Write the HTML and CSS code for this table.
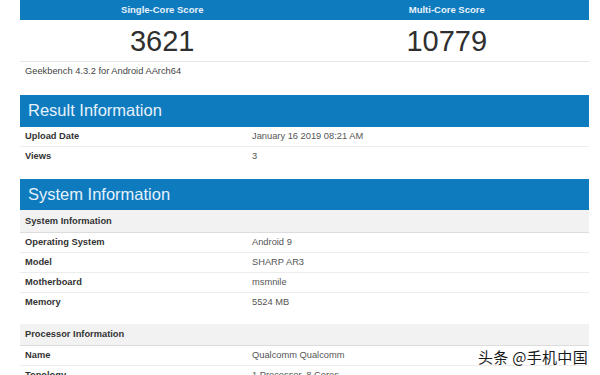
FILE: index.html
```html
<!DOCTYPE html>
<html>
<head>
<meta charset="utf-8">
<link rel="stylesheet" href="styles.css">
</head>
<body>
<div class="page">
  <div class="scores">
    <div class="score-col">
      <div class="score-head">Single-Core Score</div>
      <div class="score-num">3621</div>
    </div>
    <div class="score-col">
      <div class="score-head">Multi-Core Score</div>
      <div class="score-num">10779</div>
    </div>
  </div>
  <div class="note">Geekbench 4.3.2 for Android AArch64</div>

  <div class="section result">
    <div class="sec-title">Result Information</div>
    <div class="row"><div class="lbl">Upload Date</div><div class="val">January 16 2019 08:21 AM</div></div>
    <div class="row last"><div class="lbl">Views</div><div class="val">3</div></div>
  </div>

  <div class="section system">
    <div class="sec-title">System Information</div>
    <div class="sub">System Information</div>
    <div class="row"><div class="lbl">Operating System</div><div class="val">Android 9</div></div>
    <div class="row"><div class="lbl">Model</div><div class="val">SHARP AR3</div></div>
    <div class="row"><div class="lbl">Motherboard</div><div class="val">msmnile</div></div>
    <div class="row last"><div class="lbl">Memory</div><div class="val">5524 MB</div></div>
    <div class="sub proc">Processor Information</div>
    <div class="row"><div class="lbl">Name</div><div class="val">Qualcomm Qualcomm</div></div>
    <div class="row last"><div class="lbl">Topology</div><div class="val">1 Processor, 8 Cores</div></div>
  </div>
</div>
<div class="watermark">头条 @手机中国</div>
</body>
</html>
```

FILE: styles.css
```css
html, body {
  margin: 0;
  padding: 0;
  background: #ffffff;
  overflow: hidden;
  height: 375px;
}
body {
  font-family: "Liberation Sans", Arial, sans-serif;
  color: #333333;
  position: relative;
}
.page {
  margin-left: 20px;
  width: 569px;
}
.scores {
  display: flex;
  border-bottom: 1px solid #e6e6e6;
}
.score-col {
  flex: 1;
  text-align: center;
}
.score-head {
  background: #0f7bbf;
  color: #e8f3fb;
  font-weight: bold;
  font-size: 9.5px;
  height: 20px;
  line-height: 19px;
}
.score-num {
  font-size: 29px;
  height: 41px;
  line-height: 42px;
  color: #2f2f2f;
}
.note {
  font-size: 9.3px;
  color: #444;
  padding-left: 5px;
  height: 20px;
  line-height: 19px;
}
.section {
  margin-top: 13px;
}
.sec-title {
  background: #0f7bbf;
  color: #e6f2fb;
  font-size: 16.5px;
  height: 32px;
  line-height: 31px;
  padding-left: 8px;
}
.system .sec-title {
  height: 31px;
}
.row {
  display: flex;
  font-size: 9.3px;
  height: 19px;
  line-height: 19px;
  border-bottom: 1px solid #ececec;
}
.row.last {
  border-bottom: none;
}
.lbl {
  width: 227px;
  padding-left: 5px;
  font-weight: bold;
  color: #333;
}
.val {
  color: #555;
}
.sub {
  background: #f2f2f2;
  font-weight: bold;
  font-size: 9.3px;
  color: #333;
  height: 22px;
  line-height: 22px;
  padding-left: 5px;
  border-bottom: 1px solid #dcdcdc;
}
.sub.proc {
  margin-top: 12px;
  height: 21px;
  line-height: 21px;
}
.watermark {
  position: absolute;
  left: 478px;
  top: 346px;
  font-family: "Noto Sans CJK SC", "Noto Sans", sans-serif;
  font-size: 15px;
  color: #1a1a1a;
  text-shadow: 0 0 2px #fff, 0 0 2px #fff;
  letter-spacing: 0.3px;
}
```
